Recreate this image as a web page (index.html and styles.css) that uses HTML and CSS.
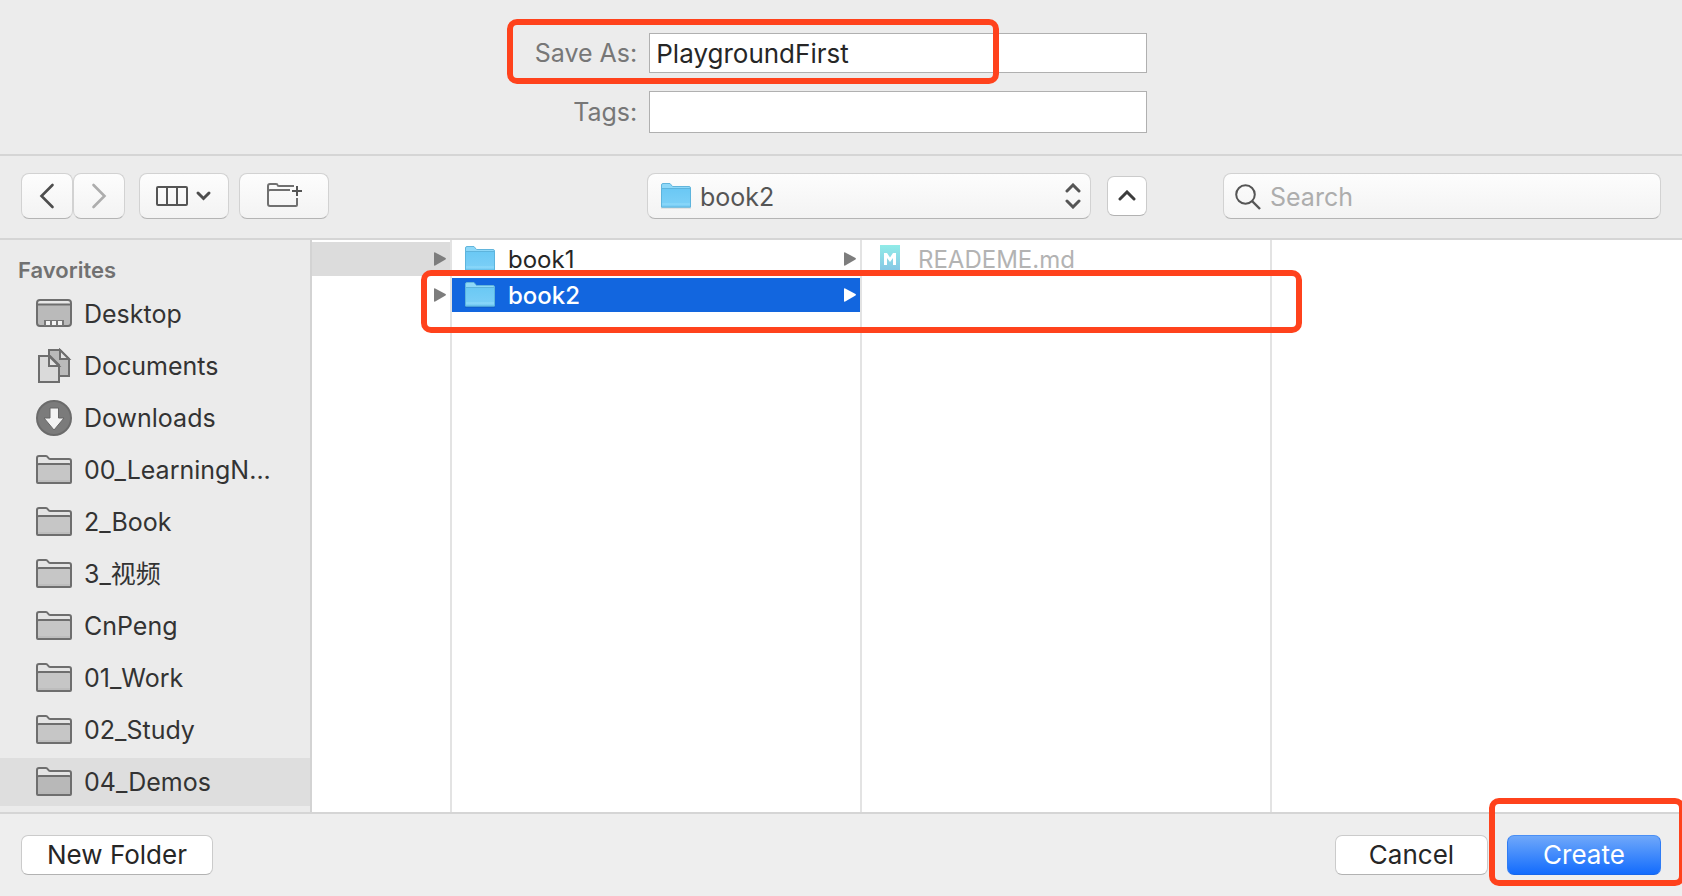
FILE: index.html
```html
<!DOCTYPE html>
<html lang="en">
<head>
<meta charset="utf-8">
<title>Save As</title>
<link rel="stylesheet" href="styles.css">
</head>
<body>
<svg class="defs" aria-hidden="true">
  <defs>
    <linearGradient id="blue" x1="0" y1="0" x2="0" y2="1"><stop offset="0" stop-color="#6ac8f4"/><stop offset="1" stop-color="#7dd0f7"/></linearGradient>
    <linearGradient id="teal" x1="0" y1="0" x2="0" y2="1"><stop offset="0" stop-color="#90ece8"/><stop offset="1" stop-color="#85c3e4"/></linearGradient>
    <symbol id="folder" viewBox="0 0 36 30">
      <path d="M1 28V3q0-2 2-2h7q1 0 2 2t2 1.500h19q2 0 2 2V28z" fill="#e4e4e4"/>
      <path d="M1 9h34v19H1z" fill="currentColor"/>
      <path d="M2 26h32" stroke="#b4b4b4"/>
      <path d="M1 27V3q0-2 2-2h7q1 0 2 1.500t2 1.500h19q2 0 2 2v21q0 1-1 1H2q-1 0-1-1zM1 10q0-1 2-1h30q2 0 2 1" fill="none" stroke="#6e6e6e" stroke-width="2"/>
    </symbol>
    <symbol id="bluefolder" viewBox="0 0 30 26">
      <path d="M0 24.500h30v1H0z" fill="#000" opacity=".15"/>
      <path d="M.5 24V2Q.5.5 2 .5h7l2.500 3H28q1.500 0 1.500 1.500v19z" fill="#8ed8f8" stroke="#62b5dc"/>
      <path d="M.5 5.500h29v18.500H.5z" fill="url(#blue)" stroke="#5db4dd"/>
      <path d="M1 21h28" stroke="#93dcfb"/>
    </symbol>
    <symbol id="tri" viewBox="0 0 12 14"><path d="M0 1q0-1 1.200-.6L11.500 6q.8.6 0 1.400L1.200 13.600Q0 14 0 13z" fill="currentColor"/></symbol>
  </defs>
</svg>

<form class="dialog">
  <section class="naming">
    <div class="fields">
      <label for="name">Save As:</label>
      <input id="name" class="field" type="text" value="PlaygroundFirst">
      <label for="tags">Tags:</label>
      <input id="tags" class="field field-tags" type="text">
      <span class="mark mark-name"></span>
    </div>
  </section>

  <div class="toolbar">
    <div class="history">
      <button type="button" class="tool" aria-label="Back"><svg width="16" height="26" viewBox="0 0 16 26"><path d="M13.500 2 2.500 13l11 11" fill="none" stroke="#4d4d4d" stroke-width="2.600" stroke-linecap="round"/></svg></button>
      <button type="button" class="tool" aria-label="Forward"><svg width="16" height="26" viewBox="0 0 16 26"><path d="m2.500 2 11 11-11 11" fill="none" stroke="#adadad" stroke-width="2.600" stroke-linecap="round"/></svg></button>
    </div>
    <button type="button" class="tool tool-wide" aria-label="View">
      <svg width="58" height="22" viewBox="0 0 58 22"><g fill="none" stroke="#555" stroke-width="2"><rect x="2" y="2" width="30" height="18" rx="1"/><path d="M12 2v18M22 2v18"/></g><path d="m43 8 5.500 5.500L54 8" fill="none" stroke="#4d4d4d" stroke-width="3" stroke-linecap="round"/></svg>
    </button>
    <button type="button" class="tool tool-wide" aria-label="Group">
      <svg width="36" height="30" viewBox="0 0 36 30"><g fill="none" stroke="#707070" stroke-width="2"><path d="M28 5H13q-1.500 0-1.500-1T10 3H4Q2 3 2 5v18q0 2 2 2h26q1 0 1-1v-7M2 11q0-2 2-2h20"/></g><path d="M31 5v10M26 10h10" stroke="#555" stroke-width="2"/></svg>
    </button>
    <div class="location">
      <svg class="location-icon" width="30" height="26"><use href="#bluefolder"/></svg>
      <select class="location-select" aria-label="Location"><option>book2</option></select>
      <svg class="location-arrows" width="18" height="26" viewBox="0 0 18 26"><path d="m3 8 6-6 6 6M3 18l6 6 6-6" fill="none" stroke="#555" stroke-width="3" stroke-linecap="round"/></svg>
    </div>
    <button type="button" class="button up" aria-label="Collapse"><svg width="18" height="12" viewBox="0 0 18 12"><path d="m2 9 7-7 7 7" fill="none" stroke="#3c3c3c" stroke-width="3" stroke-linecap="round"/></svg></button>
    <div class="search">
      <svg class="search-icon" width="26" height="26" viewBox="0 0 26 26"><circle cx="10.500" cy="10.500" r="9.300" fill="none" stroke="#555" stroke-width="2"/><path d="m17 17 8 8" stroke="#555" stroke-width="2.400"/></svg>
      <input class="search-input" type="search" placeholder="Search" aria-label="Search">
    </div>
  </div>

  <main class="browser">
    <nav class="sidebar">
      <h2>Favorites</h2>
      <a href="#"><svg width="36" height="30" viewBox="0 0 36 30"><rect x="1" y="1" width="34" height="26" rx="3" fill="#bababa"/><path d="M2 2h32v3H2z" fill="#e8e8e8"/><rect x="1" y="1" width="34" height="26" rx="3" fill="none" stroke="#6e6e6e" stroke-width="2"/><path d="M1 5.500h34" stroke="#6e6e6e" stroke-width="2"/><path d="M8 21h20v6H8z" fill="#777"/><path d="M10 22h4v4h-4zM16 22h4v4h-4zM22 22h4v4h-4z" fill="#f4f4f4"/></svg><span>Desktop</span></a>
      <a href="#"><svg width="36" height="36" viewBox="0 0 36 36"><g stroke="#6e6e6e" stroke-width="2"><path d="M13 2h11l9 9v17H13z" fill="#bababa"/><path d="M24 2v9h9z" fill="#e4e4e4"/><path d="M3 8h11l9 9v17H3z" fill="#dadada"/><path d="M13 8v10h10z" fill="#e4e4e4"/></g></svg><span>Documents</span></a>
      <a href="#"><svg width="36" height="36" viewBox="0 0 36 36"><circle cx="18" cy="18" r="17" fill="#7b7b7b" stroke="#6b6b6b" stroke-width="2"/><path d="M14 8h8.500v10H28L18 30 8 18h6z" fill="#f3f3f3" stroke="#666"/></svg><span>Downloads</span></a>
      <a href="#"><svg width="36" height="30"><use href="#folder"/></svg><span>00_LearningN...</span></a>
      <a href="#"><svg width="36" height="30"><use href="#folder"/></svg><span>2_Book</span></a>
      <a href="#"><svg width="36" height="30"><use href="#folder"/></svg><span>3_视频</span></a>
      <a href="#"><svg width="36" height="30"><use href="#folder"/></svg><span>CnPeng</span></a>
      <a href="#"><svg width="36" height="30"><use href="#folder"/></svg><span>01_Work</span></a>
      <a href="#"><svg width="36" height="30"><use href="#folder"/></svg><span>02_Study</span></a>
      <a href="#" class="current"><svg width="36" height="30"><use href="#folder"/></svg><span>04_Demos</span></a>
    </nav>
    <div class="columns">
      <ul class="column column-parent">
        <li class="item item-open"><svg class="tri" width="12" height="14"><use href="#tri"/></svg></li>
        <li class="item"><svg class="tri" width="12" height="14"><use href="#tri"/></svg></li>
      </ul>
      <ul class="column">
        <li class="item"><svg class="item-icon" width="30" height="26"><use href="#bluefolder"/></svg><span>book1</span><svg class="tri" width="12" height="14"><use href="#tri"/></svg></li>
        <li class="item item-selected"><svg class="item-icon" width="30" height="26"><use href="#bluefolder"/></svg><span>book2</span><svg class="tri" width="12" height="14"><use href="#tri"/></svg></li>
      </ul>
      <ul class="column">
        <li class="item item-file"><svg class="file-icon" width="20" height="28" viewBox="0 0 20 28"><path d="M0 0h20v28H0z" fill="url(#teal)"/><path d="M4 20V8h3l3 4.500L13 8h3v12h-3v-7l-3 4-3-4v7z" fill="#fff"/></svg><span>READEME.md</span></li>
      </ul>
      <span class="mark mark-row"></span>
    </div>
  </main>

  <footer class="actions">
    <button type="button" class="button new-folder">New Folder</button>
    <button type="button" class="button cancel">Cancel</button>
    <div class="confirm">
      <button type="submit" class="button create">Create</button>
      <span class="mark mark-create"></span>
    </div>
  </footer>
</form>
</body>
</html>
```
FILE: styles.css
```css
* { box-sizing: border-box; }

body {
  margin: 0;
  overflow: hidden;
  background: #ececec;
  color: #262626;
  font: 25px/32px Inter, "Noto Sans CJK SC", sans-serif;
}

button, input, select { font: inherit; color: inherit; margin: 0; }
svg { flex: none; display: block; }
.defs { position: absolute; width: 0; height: 0; }

.dialog { display: flex; flex-direction: column; min-height: 100vh; }

.naming {
  padding: 33px 0 21px;
  border-bottom: 2px solid #d5d5d5;
}
.fields {
  position: relative;
  display: grid;
  grid-template-columns: auto 498px;
  gap: 18px 12px;
  align-items: center;
  width: max-content;
  margin: 0 auto;
}
.fields label { color: #777; text-align: right; }
.field {
  height: 40px;
  padding: 0 6px;
  border: 1px solid #b0b0b0;
  background: #fff;
  font-size: 26px;
}
.field-tags { height: 42px; }

.mark {
  position: absolute;
  border: 6px solid #ff421c;
  border-radius: 10px;
  pointer-events: none;
}
.mark-name { right: 148px; top: -14px; width: 492px; height: 65px; }
.mark-row { left: 109px; top: 30px; width: 881px; height: 63px; }
.mark-create { left: -18px; top: -37px; width: 196px; height: 88px; }

.toolbar {
  display: flex;
  align-items: center;
  padding: 17px 21px 19px;
  border-bottom: 2px solid #d5d5d5;
}
.tool, .location-select, .search-input {
  height: 46px;
  border: 1px solid #d2d2d2;
  border-bottom-color: #b4b4b4;
  border-radius: 8px;
  background: linear-gradient(#fdfdfd, #f3f3f3);
}
.tool {
  display: flex;
  align-items: center;
  justify-content: center;
  width: 52px;
  padding: 0;
}
.history { display: flex; }
.tool-wide { width: 90px; margin-left: 14px; }
.tool-wide + .tool-wide { margin-left: 10px; }

.location { position: relative; width: 444px; margin-left: auto; }
.location-icon { position: absolute; left: 14px; top: 10px; }
.location-arrows { position: absolute; right: 9px; top: 10px; }
.location-select {
  display: block;
  appearance: none;
  width: 100%;
  padding: 1px 52px 0;
  color: #555;
}
.button {
  height: 40px;
  padding: 0;
  border: 1px solid #cbcbcb;
  border-bottom-color: #b2b2b2;
  border-radius: 7px;
  background: #fff;
  font-size: 26px;
  text-align: center;
}
.up {
  display: flex;
  align-items: center;
  justify-content: center;
  width: 40px;
  margin-left: 16px;
}
.search { position: relative; width: 438px; margin-left: 76px; }
.search-icon { position: absolute; left: 12px; top: 11px; }
.search-input { display: block; appearance: none; width: 100%; padding: 1px 16px 0 46px; }
.search-input::placeholder { color: #adadad; opacity: 1; }

.browser { display: flex; flex: 1; }
.sidebar {
  width: 312px;
  padding: 14px 0 6px;
  border-right: 2px solid #d3d3d3;
  background: #ebebeb;
}
.sidebar h2 {
  margin: 0 0 4px;
  padding-left: 18px;
  color: #717171;
  font-size: 22px;
  font-weight: 600;
  line-height: 32px;
}
.sidebar a {
  display: flex;
  align-items: center;
  gap: 12px;
  height: 48px;
  margin-bottom: 4px;
  padding-left: 36px;
  color: #333;
  text-decoration: none;
}
.sidebar a.current { margin-bottom: 0; background: #dedede; }
.sidebar svg { color: #c6c6c6; }
.sidebar .current svg { color: #b8b8b8; }

.columns { position: relative; display: flex; flex: 1; background: #fff; }
.column {
  width: 410px;
  margin: 0;
  padding: 2px 0;
  border-right: 2px solid #e3e3e3;
  font-size: 24px;
  list-style: none;
}
.column-parent { width: 140px; }
.item {
  display: flex;
  align-items: center;
  height: 34px;
  margin-bottom: 2px;
  padding: 0 4px 0 13px;
}
.item span { padding-top: 2px; }
.item-open { background: #dcdcdc; }
.item-selected { background: #1266df; color: #fff; font-weight: 500; }
.item-icon { margin-right: 13px; }
.tri { margin-left: auto; color: #7d7d7d; }
.item-selected .tri { color: #fff; }
.item-file { padding-left: 18px; color: #b3b3b3; }
.file-icon { margin-right: 18px; }

.actions {
  display: flex;
  align-items: flex-start;
  padding: 21px 21px 21px;
  border-top: 2px solid #d5d5d5;
  background: #eee;
}
.new-folder { width: 192px; margin-right: auto; }
.cancel { width: 153px; margin-right: 19px; }
.confirm { position: relative; }
.create {
  display: block;
  width: 154px;
  border-color: #4a8ff5 #2f7cf4 #1767ea;
  background: linear-gradient(#6fa8fa, #136cfd);
  color: #fff;
}
```
